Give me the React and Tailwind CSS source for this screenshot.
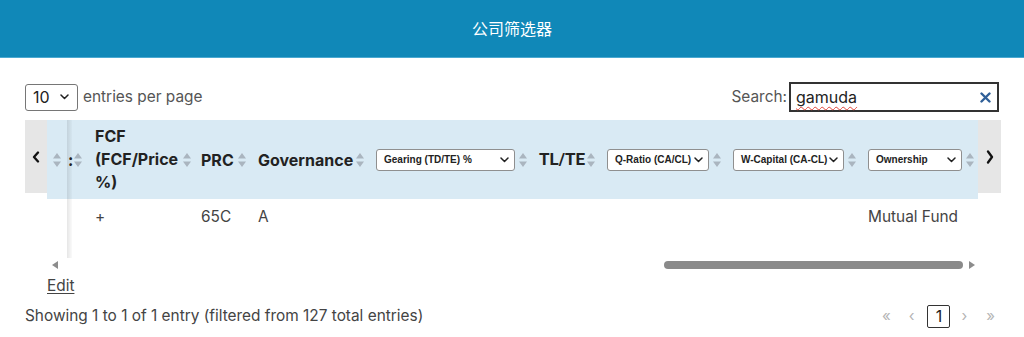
import React from 'react';

const SortIcon = () => (
  <svg width="8" height="14" viewBox="0 0 8 14" className="shrink-0">
    <path d="M4 0 L8 5.5 L0 5.5 Z M4 14 L8 8.5 L0 8.5 Z" fill="#aab5bf" />
  </svg>
);

const Chevron = ({ className = '' }) => (
  <svg width="9" height="6" viewBox="0 0 9 6" className={className}>
    <path d="M1 1 L4.5 4.5 L8 1" fill="none" stroke="#222" strokeWidth="1.5" strokeLinecap="round" strokeLinejoin="round" />
  </svg>
);

const FakeSelect = ({ label, width }) => (
  <div
    className="h-[22px] flex items-center justify-between pl-[7px] pr-[5px] bg-white border border-[#8f8f8f] rounded-[3px] text-[10px] font-bold text-[#222] whitespace-nowrap"
    style={{ width, fontFamily: '"Liberation Sans", Arial, sans-serif' }}
  >
    <span>{label}</span>
    <Chevron />
  </div>
);

// column layout shared by header and body rows: margin before content, content width
const columns = [
  { ml: 'ml-[6px]', w: 'w-0', head: null, body: '', gap: 'ml-0' },
  { ml: 'ml-[7px]', w: 'w-[3px]', head: <span className="font-bold leading-none">:</span>, body: '', gap: 'ml-[3px]' },
  {
    ml: 'ml-[13px]', w: 'w-[84px]',
    head: (
      <div className="font-bold leading-[23px] whitespace-nowrap">
        <div>FCF</div>
        <div>(FCF/Price</div>
        <div>%)</div>
      </div>
    ),
    body: '+',
  },
  { ml: 'ml-[10px]', w: 'w-[33px]', head: <span className="font-bold">PRC</span>, body: '65C' },
  { ml: 'ml-[12px]', w: 'w-[94px]', head: <span className="font-bold">Governance</span>, body: 'A' },
  { ml: 'ml-[12px]', w: 'w-[139px]', head: <FakeSelect label="Gearing (TD/TE) %" width={139} />, body: '' },
  {
    ml: 'ml-[12px]', w: 'w-[44px]',
    head: <span className="font-bold text-[17px]" style={{ fontFamily: 'Roboto, sans-serif' }}>TL/TE</span>,
    body: '',
  },
  { ml: 'ml-[12px]', w: 'w-[102px]', head: <FakeSelect label="Q-Ratio (CA/CL)" width={102} />, body: '' },
  { ml: 'ml-[12px]', w: 'w-[111px]', head: <FakeSelect label="W-Capital (CA-CL)" width={111} />, body: '' },
  { ml: 'ml-[12px]', w: 'w-[94px]', head: <FakeSelect label="Ownership" width={94} />, body: 'Mutual Fund' },
];

export default function App() {
  return (
    <div
      className="w-[1024px] h-[337px] bg-white overflow-hidden text-[15.4px] text-[#444]"
      style={{ fontFamily: 'Inter, "Noto Sans", "Noto Sans CJK SC", sans-serif' }}
    >
      {/* Title bar */}
      <header className="h-[58px] bg-[#1088b8] border-b border-[#4ba9d1] flex items-center justify-center text-white text-[16px]">
        公司筛选器
      </header>

      <div className="px-[25px] pt-[24px]">
        {/* Controls */}
        <div className="flex items-center justify-between h-[30px]">
          <div className="flex items-center gap-[5px]">
            <div className="w-[53px] h-[27px] flex items-center justify-between pl-[7px] pr-[8px] border border-[#767676] rounded-[3px] text-[16px] text-[#222]">
              <span>10</span>
              <Chevron />
            </div>
            <span className="text-[#555]">entries per page</span>
          </div>
          <div className="flex items-center gap-[2px]">
            <span className="text-[#555]">Search:</span>
            <div className="w-[210px] h-[30px] border-2 border-[#333] flex items-center justify-between pl-[5px] pr-[6px]">
              <span className="text-[16px] text-[#222] underline decoration-wavy decoration-[#e0453a] decoration-1 underline-offset-[3px]">gamuda</span>
              <svg width="11" height="11" viewBox="0 0 11 11">
                <path d="M1.5 1.5 L9.5 9.5 M9.5 1.5 L1.5 9.5" stroke="#2f5f98" strokeWidth="2.4" strokeLinecap="round" />
              </svg>
            </div>
          </div>
        </div>

        {/* Table */}
        <div className="mt-[8px] flex relative">
          <div className="w-[22px] h-[73px] bg-[#e6e6e6] flex items-center justify-center shrink-0">
            <svg width="8" height="12" viewBox="0 0 8 12">
              <path d="M6 1.5 L2 6 L6 10.5" fill="none" stroke="#111" strokeWidth="2.3" strokeLinecap="round" strokeLinejoin="round" />
            </svg>
          </div>

          <div className="w-[931px] shrink-0">
            <div className="h-[79px] bg-[#d9eaf4] flex items-center text-[16px] text-[#222]">
              {columns.map((c, i) => (
                <div key={i} className={`flex items-center ${c.ml}`}>
                  <div className={`${c.w} flex items-center`}>{c.head}</div>
                  <div className={c.gap || 'ml-[4px]'}>
                    <SortIcon />
                  </div>
                </div>
              ))}
            </div>
            <div className="h-[59px] flex items-start pt-[6px] leading-[24px]">
              {columns.map((c, i) => (
                <div key={i} className={`flex ${c.ml}`}>
                  <div className={`${c.w} whitespace-nowrap`}>{c.body}</div>
                  <div className={`${c.gap || 'ml-[4px]'} w-[8px]`} />
                </div>
              ))}
            </div>
            <div className="h-[14px] flex items-center">
              <svg width="6" height="8" viewBox="0 0 6 8" className="ml-[5px]">
                <path d="M6 0 L0 4 L6 8 Z" fill="#8c8c8c" />
              </svg>
              <div className="ml-auto w-[299px] h-[8px] rounded-full bg-[#8a8a8a]" />
              <svg width="6" height="8" viewBox="0 0 6 8" className="ml-[6px] mr-[3px]">
                <path d="M0 0 L6 4 L0 8 Z" fill="#8c8c8c" />
              </svg>
            </div>
          </div>

          <div className="w-[23px] h-[73px] bg-[#e6e6e6] flex items-center justify-center shrink-0">
            <svg width="8" height="14" viewBox="0 0 8 14">
              <path d="M2 1.5 L6 7 L2 12.5" fill="none" stroke="#111" strokeWidth="2.3" strokeLinecap="round" strokeLinejoin="round" />
            </svg>
          </div>

          {/* sticky column shadow */}
          <div className="absolute left-[42px] top-0 w-[5px] h-[138px] bg-linear-to-r from-black/10 to-black/[0.02]" />
        </div>

        <div className="mt-[2px] h-[24px] leading-[24px] ml-[22px]">
          <span className="underline underline-offset-2 text-[#444]">Edit</span>
        </div>

        {/* Footer */}
        <div className="mt-[6px] h-[24px] flex items-center justify-between">
          <span className="text-[#444]">Showing 1 to 1 of 1 entry (filtered from 127 total entries)</span>
          <div className="flex items-center text-[15px] text-[#b5b5b5] mr-[4px]">
            <span>«</span>
            <span className="ml-[18px]">‹</span>
            <span className="ml-[13px] w-[23px] h-[23px] flex items-center justify-center border border-[#333] rounded-[2px] text-[16px] text-[#222]">1</span>
            <span className="ml-[11px]">›</span>
            <span className="ml-[19px]">»</span>
          </div>
        </div>
      </div>
    </div>
  );
}
